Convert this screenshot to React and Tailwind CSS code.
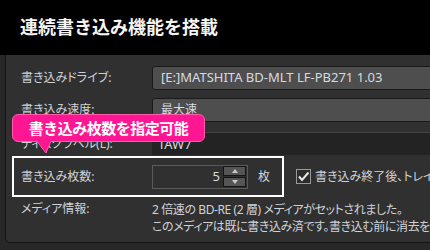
import React from "react";

const font = "font-['Noto_Sans','Noto_Sans_CJK_JP',sans-serif]";
const jp = "[font-feature-settings:'palt']";

function Label({ children, className = "" }) {
  return (
    <div className={`w-[131px] shrink-0 text-[12px] leading-none text-[#cfd3d8] ${jp} ${className}`}>
      {children}
    </div>
  );
}

function Field({ children }) {
  return (
    <div className="flex-1 h-[24px] flex items-center pl-[8px] rounded-[3px] border border-[#1a1a1a] bg-[#4e4e4e] text-[13px] leading-none text-[#d6dbe0] whitespace-nowrap overflow-hidden -mr-[4px]">
      {children}
    </div>
  );
}

function Arrow({ up }) {
  return (
    <svg width="6" height="4" viewBox="0 0 6 4">
      <polygon points={up ? "0,4 6,4 3,0" : "0,0 6,0 3,4"} fill="#c8c8c8" />
    </svg>
  );
}

export default function App() {
  return (
    <div className={`w-[430px] h-[250px] overflow-hidden bg-[#282828] flex flex-col ${font}`}>
      {/* header */}
      <div className="h-[55px] shrink-0 bg-black flex items-center pl-[20px] pb-[1px]">
        <h1 className="text-[18px] font-bold leading-none text-[#f4f4f4]">
          連続書き込み機能を搭載
        </h1>
      </div>

      {/* panel */}
      <div className="relative ml-[5px] h-[188px] shrink-0 bg-[#303030] border-l border-b border-[#141414] rounded-bl-[5px] pl-[15px] pt-[11px] flex flex-col">
        <div className="flex items-center h-[23px]">
          <Label>書き込みドライブ:</Label>
          <Field>[E:]MATSHITA BD-MLT LF-PB271 1.03</Field>
        </div>
        <div className="flex items-center h-[24px] mt-[9px]">
          <Label>書き込み速度:</Label>
          <Field>
            <span className={`text-[12px] ${jp}`}>最大速</span>
          </Field>
        </div>
        <div className="flex items-center h-[23px] mt-[10px]">
          <Label>ディスクラベル(L):</Label>
          <div className="flex-1 h-[23px] flex items-center pl-[6px] bg-[#232323] border-t border-[#444] -mr-[4px] text-[13px] leading-none text-[#d6dbe0]">
            TAW7
          </div>
        </div>

        {/* highlighted row */}
        <div className="flex items-center mt-[1px]">
          <div className="-ml-[9px] w-[272px] shrink-0 h-[41px] border-2 border-white flex items-center pl-[7px]">
            <Label className="w-[130px]">書き込み枚数:</Label>
            <div className="w-[96px] h-[24px] shrink-0 border border-[#5a5a5a] flex items-center justify-end pr-[1px]">
              <span className="text-[13px] leading-none text-[#d6dbe0] mr-[3px]">5</span>
              <div className="flex flex-col gap-[1px]">
                <div className="w-[23px] h-[10px] bg-[#555] border border-[#151515] flex items-center justify-center">
                  <Arrow up />
                </div>
                <div className="w-[23px] h-[10px] bg-[#555] border border-[#151515] flex items-center justify-center">
                  <Arrow />
                </div>
              </div>
            </div>
            <span className="ml-[10px] text-[12px] leading-none text-[#cfd3d8]">枚</span>
          </div>
          <div className="ml-[12px] flex items-center whitespace-nowrap">
            <div className="w-[15px] h-[15px] shrink-0 border border-[#9a9a9a] bg-[#2c2c2c] flex items-center justify-center">
              <svg width="13" height="13" viewBox="0 0 13 13">
                <path d="M2 6.5 L5 10 L11.5 2.5" fill="none" stroke="#e8e8e8" strokeWidth="2" />
              </svg>
            </div>
            <span className={`ml-[4px] text-[12px] leading-none text-[#cfd3d8] ${jp}`}>
              書き込み終了後、トレイを排出する
            </span>
          </div>
        </div>

        {/* media info */}
        <div className="flex items-start mt-[4px]">
          <Label className="pt-[2px]">メディア情報:</Label>
          <div className={`text-[12px] leading-[17px] text-[#cfd3d8] whitespace-nowrap tracking-[-0.4px] ${jp}`}>
            <div>2 倍速の BD-RE (2 層) メディアがセットされました。</div>
            <div>このメディアは既に書き込み済です。書き込む前に消去を行ってください。</div>
          </div>
        </div>

        {/* callout */}
        <div className="absolute left-[6px] top-[59px] w-[193px] h-[28px] rounded-[6px] bg-[#ff1693] border border-[#ff5cab] flex items-center justify-center">
          <span className="text-[15px] font-bold leading-none text-white tracking-[-0.5px]">書き込み枚数を指定可能</span>
          <svg className="absolute left-[24px] top-[26px]" width="16" height="13" viewBox="0 0 16 13">
            <polygon points="0,0 14,0 9,12" fill="#ff1693" />
            <polyline points="0.5,1 9,12 13.5,1" fill="none" stroke="#ff5cab" strokeWidth="1" />
          </svg>
        </div>
      </div>
    </div>
  );
}
